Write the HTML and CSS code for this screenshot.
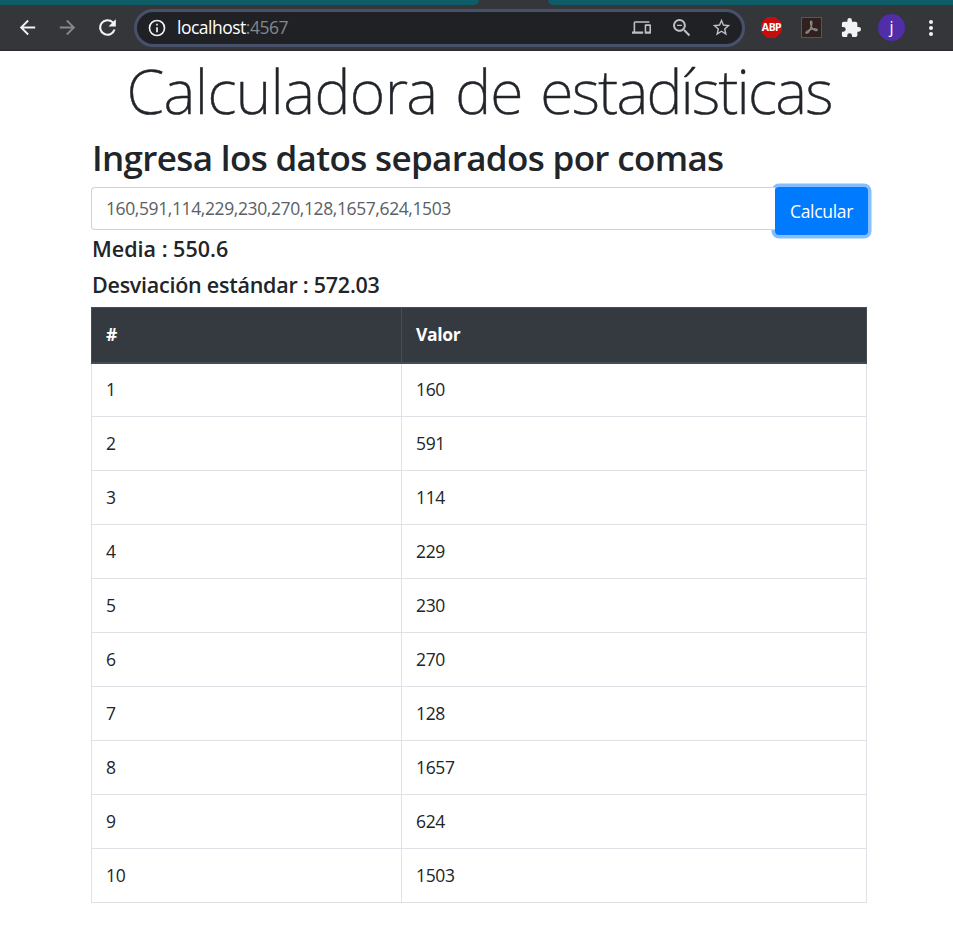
FILE: index.html
```html
<!DOCTYPE html>
<html lang="es">
<head>
<meta charset="utf-8">
<title>Calculadora de estadísticas</title>
<link rel="stylesheet" href="styles.css">
</head>
<body>
<header class="browser">
  <div class="tabstrip"><span class="strip-left"></span><span class="strip-right"></span></div>
  <div class="toolbar">
    <svg class="icon back" viewBox="0 0 24 24"><path d="M20 11H7.8l5.6-5.6L12 4l-8 8 8 8 1.4-1.4L7.8 13H20z"/></svg>
    <svg class="icon forward" viewBox="0 0 24 24"><path d="M12 4l-1.4 1.4 5.6 5.6H4v2h12.2l-5.6 5.6L12 20l8-8z"/></svg>
    <svg class="icon reload" viewBox="0 0 24 24"><path d="M17.65 6.35A8 8 0 1 0 19.73 14h-2.08A6 6 0 1 1 12 6c1.66 0 3.14.69 4.22 1.78L13 11h7V4z"/></svg>
    <div class="omnibox">
      <svg class="info" viewBox="0 0 24 24"><path d="M11 17h2v-6h-2zm0-8h2V7h-2zm1-7a10 10 0 1 0 0 20 10 10 0 0 0 0-20zm0 18a8 8 0 1 1 0-16 8 8 0 0 1 0 16z"/></svg>
      <span class="url"><span class="host">localhost</span><span class="port">:4567</span></span>
      <svg class="action devices" viewBox="0 0 24 24"><path d="M4 6h18V4H4a2 2 0 0 0-2 2v11H0v3h14v-3H4zm19 2h-6a1 1 0 0 0-1 1v10c0 .55.45 1 1 1h6c.55 0 1-.45 1-1V9c0-.55-.45-1-1-1zm-1 9h-4v-7h4z"/></svg>
      <svg class="action" viewBox="0 0 24 24"><path d="M15.5 14h-.79l-.28-.27A6.5 6.5 0 1 0 13.73 14.43l.27.28v.79l5 4.99L20.49 19zm-6 0a4.5 4.5 0 1 1 0-9 4.5 4.5 0 0 1 0 9zM7 8.8h5v1.4H7z" transform="translate(-1 -1) scale(1.12)"/></svg>
      <svg class="action" viewBox="0 0 24 24"><path d="M22 9.24l-7.19-.62L12 2 9.19 8.63 2 9.24l5.46 4.73L5.82 21 12 17.27 18.18 21l-1.63-7.03zM12 15.4l-3.76 2.27 1-4.28-3.32-2.88 4.38-.38L12 6.1l1.71 4.04 4.38.38-3.32 2.88 1 4.28z"/></svg>
    </div>
    <div class="abp">ABP</div>
    <div class="pdf"><svg viewBox="0 0 20 20"><path d="M9.5 3.3c1.5 0 1 3.2.2 5.7-.9 2.8-3.1 7-4.8 7-2.3 0 .6-3.200 4.600-4.100 3.200-.7 6.500-.5 6.500.8 0 1.500-3.800.4-5.600-2.600C9.100 7.900 8.300 3.300 9.500 3.300z"/></svg></div>
    <svg class="puzzle" viewBox="1 1 22 22"><path d="M20.500 11H19V7a2 2 0 0 0-2-2h-4V3.500a2.500 2.500 0 0 0-5 0V5H4a2 2 0 0 0-2 2v3.800h1.500a2.700 2.700 0 0 1 0 5.400H2V20c0 1.100.9 2 2 2h3.800v-1.500a2.700 2.700 0 0 1 5.400 0V22H17a2 2 0 0 0 2-2v-4h1.500a2.500 2.500 0 0 0 0-5z"/></svg>
    <div class="avatar">j</div>
    <div class="menu"><i></i><i></i><i></i></div>
  </div>
</header>
<main class="container">
  <h1><span class="wide">Calculadora</span> de <span class="tight">estadísticas</span></h1>
  <h2>Ingresa los datos separados por comas</h2>
  <form class="entry">
    <div class="field">160,591,114,229,230,270,128,1657,624,1503</div>
    <button class="submit" type="button">Calcular</button>
  </form>
  <h5 class="mean">Media : 550.6</h5>
  <h5 class="deviation">Desviación estándar : 572.03</h5>
  <table>
    <thead><tr><th class="index">#</th><th>Valor</th></tr></thead>
    <tbody>
      <tr><td>1</td><td>160</td></tr>
      <tr><td>2</td><td>591</td></tr>
      <tr><td>3</td><td>114</td></tr>
      <tr><td>4</td><td>229</td></tr>
      <tr><td>5</td><td>230</td></tr>
      <tr><td>6</td><td>270</td></tr>
      <tr><td>7</td><td>128</td></tr>
      <tr><td>8</td><td>1657</td></tr>
      <tr><td>9</td><td>624</td></tr>
      <tr><td>10</td><td>1503</td></tr>
    </tbody>
  </table>
</main>
</body>
</html>
```
FILE: styles.css
```css
* { box-sizing: border-box; }
body { margin: 0; height: 926px; overflow: hidden; background: #fff; color: #212529; font-family: "Open Sans", "Noto Sans", sans-serif; }
.browser { height: 51px; background: #35363a; border-bottom: 1px solid #292a2d; }
.tabstrip { height: 5px; display: flex; justify-content: space-between; }
.strip-left { width: 479px; background: #0d5c68; border-bottom-right-radius: 6px; }
.strip-right { width: 405px; background: #0d5c68; border-bottom-left-radius: 6px; }
.toolbar { height: 45px; display: flex; align-items: center; padding-left: 16px; }
.toolbar svg { fill: #f1f3f4; flex: none; display: block; }
.icon { width: 23px; height: 23px; margin-right: 17px; }
.toolbar .forward { fill: #86878a; }
.toolbar .reload { width: 25px; height: 25px; margin: 0 14px 0 -1px; }
.omnibox { width: 611px; height: 38px; border: 3px solid #48516a; border-radius: 19px; background: #202124; display: flex; align-items: center; padding-left: 10px; }
.info { width: 20px; height: 20px; margin-right: 10px; }
.url { flex: 1; margin-top: -1px; font-size: 17.5px; line-height: 24px; letter-spacing: -0.5px; color: #fff; }
.port { color: #85878a; }
.toolbar .action { width: 21px; height: 21px; margin-right: 19px; fill: #bdc1c6; }
.toolbar .devices { width: 19px; height: 19px; margin-right: 20px; }
.toolbar .action:last-child { margin-right: 10px; }
.abp { width: 21px; height: 21px; margin-left: 16px; background: #c70d0d; clip-path: polygon(30% 0, 70% 0, 100% 30%, 100% 70%, 70% 100%, 30% 100%, 0 70%, 0 30%); color: #fff; font: bold 10.5px/21px "Noto Sans", sans-serif; text-align: center; letter-spacing: -0.5px; }
.pdf { width: 21px; height: 21px; margin-left: 19px; border: 1px solid #b53024; background: #30201f; }
.toolbar .pdf svg { width: 19px; height: 19px; fill: none; stroke: #918d8d; stroke-width: 1.3; }
.puzzle { width: 20px; height: 20px; margin-left: 19px; }
.avatar { width: 27px; height: 27px; margin-left: 17px; border-radius: 50%; background: #512da8; color: #fff; font-size: 16px; line-height: 26px; text-align: center; }
.menu { margin-left: 24px; display: grid; gap: 2px; }
.menu i { width: 4px; height: 4px; border-radius: 50%; background: #f1f3f4; }
.container { width: 776px; margin-left: 91px; }
h1, h2, h5 { margin: 0; white-space: nowrap; }
h1 { height: 83px; padding-top: 1px; text-align: center; font: 200 61px/78px "Noto Sans", sans-serif; letter-spacing: -1px; word-spacing: 3px; -webkit-text-stroke: 0.5px #212529; }
.wide { letter-spacing: -0.6px; }
.tight { letter-spacing: -1.8px; }
h2 { height: 53px; padding-left: 1px; font: 600 35px/48px "Open Sans", sans-serif; letter-spacing: -0.65px; }
.entry { display: flex; height: 48px; align-items: flex-start; }
.field { position: relative; z-index: 1; flex: none; width: 684px; height: 43px; border: 1px solid #ced4da; border-right: 0; border-radius: 4px 0 0 4px; padding-left: 14px; background: #fff; color: #5a6066; font-size: 17.5px; font-weight: 400; line-height: 41px; letter-spacing: -0.39px; }
.submit { flex: none; width: 93px; height: 48px; border: 0; padding: 0; border-radius: 4px; background: #007bff; box-shadow: 0 0 0 3.5px #84beff; color: #fff; font: 400 17.5px/48px "Open Sans", sans-serif; letter-spacing: -0.3px; }
h5 { height: 36px; padding-left: 1px; font: 600 21.5px/28px "Open Sans", sans-serif; letter-spacing: -0.25px; }
.mean { letter-spacing: 0; }
table { width: 776px; border-collapse: collapse; table-layout: fixed; font-size: 17.5px; letter-spacing: -0.35px; }
th, td { height: 54px; padding: 0 14px 2px; border: 1px solid #dee2e6; text-align: left; line-height: 26px; font-weight: 400; }
th { height: 55px; background: #343a40; border-color: #454d55; border-bottom-width: 2px; color: #fff; font-weight: 700; }
.index { width: 310px; }
```
